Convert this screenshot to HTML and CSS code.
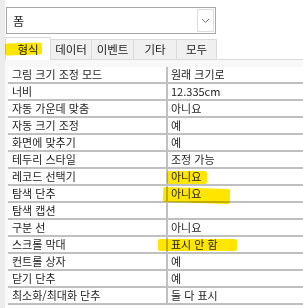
FILE: index.html
```html
<!DOCTYPE html>
<html lang="ko">
<head>
    <meta charset="UTF-8">
    <meta name="viewport" content="width=device-width, initial-scale=1.0">
    <title>속성 시트</title>
    <link rel="stylesheet" href="styles.css">
</head>
<body>
    <div class="app">
        <div class="strip"></div>
        <div class="main">
            <div class="combo">
                <span class="combo-text">폼</span>
                <span class="combo-btn">
                    <svg width="9" height="6" viewBox="0 0 9 6"><path d="M1 1 L4.5 4.5 L8 1" fill="none" stroke="#707070" stroke-width="1"/></svg>
                </span>
            </div>

            <div class="tabs">
                <div class="tab active">형식</div>
                <div class="tab">데이터</div>
                <div class="tab">이벤트</div>
                <div class="tab">기타</div>
                <div class="tab">모두</div>
                <div class="tab-rest"></div>
            </div>

            <div class="pane">
                <div class="grid">
                    <div class="row"><div class="label">그림 크기 조정 모드</div><div class="value">원래 크기로</div></div>
                    <div class="row"><div class="label">너비</div><div class="value">12.335cm</div></div>
                    <div class="row"><div class="label">자동 가운데 맞춤</div><div class="value">아니요</div></div>
                    <div class="row"><div class="label">자동 크기 조정</div><div class="value">예</div></div>
                    <div class="row"><div class="label">화면에 맞추기</div><div class="value">예</div></div>
                    <div class="row"><div class="label">테두리 스타일</div><div class="value">조정 가능</div></div>
                    <div class="row"><div class="label">레코드 선택기</div><div class="value">아니요</div></div>
                    <div class="row"><div class="label">탐색 단추</div><div class="value">아니요</div></div>
                    <div class="row"><div class="label">탐색 캡션</div><div class="value"></div></div>
                    <div class="row"><div class="label">구분 선</div><div class="value">아니요</div></div>
                    <div class="row"><div class="label">스크롤 막대</div><div class="value">표시 안 함</div></div>
                    <div class="row"><div class="label">컨트롤 상자</div><div class="value">예</div></div>
                    <div class="row"><div class="label">닫기 단추</div><div class="value">예</div></div>
                    <div class="row"><div class="label">최소화/최대화 단추</div><div class="value">둘 다 표시</div></div>
                </div>
            </div>
        </div>
    </div>

    <!-- highlighter marks drawn over the sheet -->
    <span class="mark mark-tab"></span>
    <span class="mark mark-record"></span>
    <span class="mark mark-nav"></span>
    <span class="mark mark-scroll"></span>
</body>
</html>
```

FILE: styles.css
```css
body {
    margin: 0;
    background-color: white;
    font-family: "Noto Sans CJK KR", "Noto Sans", sans-serif;
    font-size: 11px;
    color: #1e1e1e;
    overflow: hidden;
}
.app {
    display: flex;
    height: 308px;
}
.strip {
    width: 5px;
    background-color: #ececec;
    flex-shrink: 0;
}
.main {
    flex: 1;
    min-width: 0;
}
.combo {
    margin: 7px 0 0 1px;
    width: 208px;
    height: 25px;
    border: 1px solid #a8a8a8;
    display: flex;
    align-items: center;
    justify-content: space-between;
}
.combo-text {
    padding-left: 6px;
    font-size: 12px;
}
.combo-btn {
    width: 15px;
    height: 21px;
    margin-right: 1px;
    border: 1px solid #dedede;
    display: flex;
    align-items: center;
    justify-content: center;
}
.tabs {
    margin-top: 4px;
    display: flex;
    align-items: flex-end;
    height: 22px;
}
.tab {
    height: 19px;
    line-height: 19px;
    background-color: #f0f0f0;
    border: 1px solid #dadada;
    border-left: none;
    text-align: center;
    font-size: 11.5px;
}
.tab.active {
    height: 22px;
    line-height: 22px;
    background-color: white;
    border-left: 1px solid #dadada;
    border-bottom: none;
    width: 44px;
}
.tab:nth-child(2) { width: 40px; }
.tab:nth-child(3) { width: 41px; }
.tab:nth-child(4) { width: 42px; }
.tab:nth-child(5) { width: 39px; }
.tab-rest {
    flex: 1;
    border-bottom: 1px solid #dadada;
}
.pane {
    background-color: #f8f8f8;
    padding: 7px 0 0 3px;
}
.grid {
    background-color: white;
}
.row {
    display: grid;
    grid-template-columns: 160px 1fr;
    border-bottom: 2px solid #c0c0c0;
    height: 15px;
    line-height: 15px;
}
.label {
    padding-left: 4px;
    border-right: 2px solid #c0c0c0;
    white-space: nowrap;
}
.value {
    padding-left: 3px;
    white-space: nowrap;
}
.mark {
    position: absolute;
    background-color: #ffe600;
    mix-blend-mode: multiply;
    border-radius: 2px;
}
.mark-tab {
    left: 5px;
    top: 43px;
    width: 37px;
    height: 12px;
    transform: rotate(-2deg);
}
.mark-record {
    left: 167px;
    top: 171px;
    width: 40px;
    height: 13px;
}
.mark-nav {
    left: 163px;
    top: 188px;
    width: 67px;
    height: 15px;
    transform: rotate(2deg);
}
.mark-scroll {
    left: 158px;
    top: 239px;
    width: 79px;
    height: 12px;
}
```
